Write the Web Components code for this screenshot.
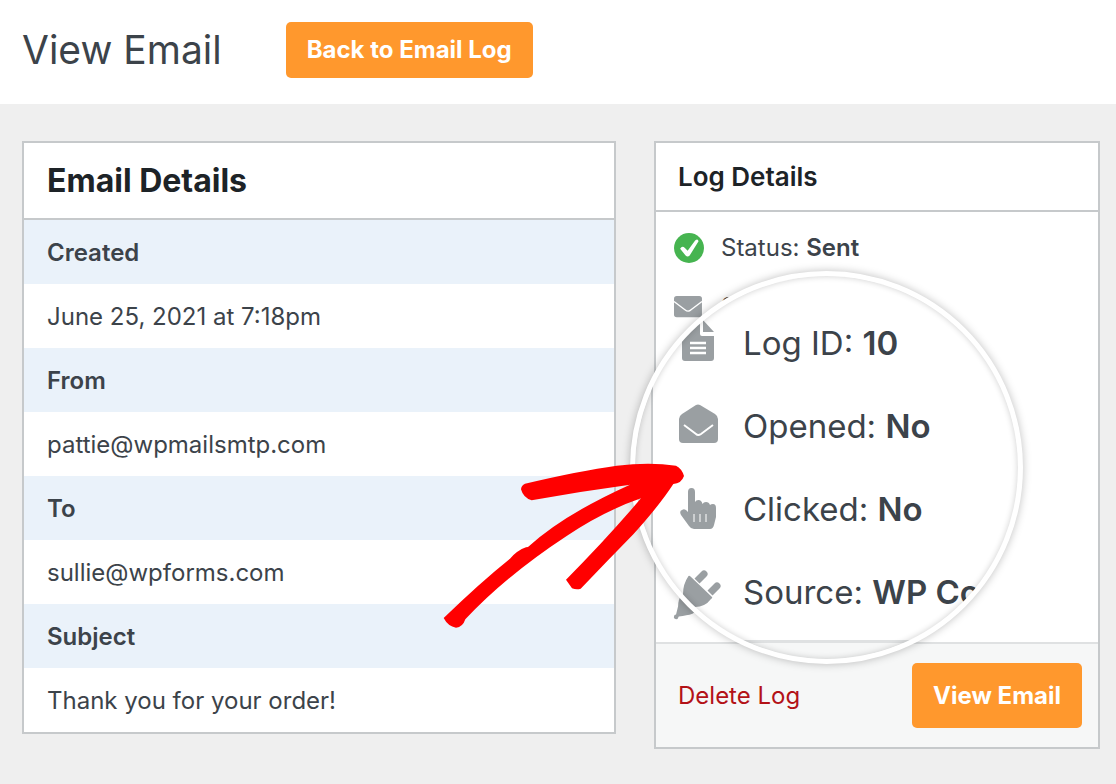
<!DOCTYPE html>
<html lang="en">
<meta charset="UTF-8">
<meta name="viewport" content="width=device-width, initial-scale=1">
<title>View Email</title>
<style>
  body {
    margin: 0;
    min-height: 100vh;
    background: #efefef;
    color: #3c434a;
    font: 24px/32px Inter, "Liberation Sans", sans-serif;
  }
</style>

<email-page></email-page>

<template id="page-template">
  <style>
    :host { display: block; }
    header {
      display: flex;
      align-items: center;
      gap: 64px;
      height: 104px;
      padding: 0 22px 5px;
      box-sizing: border-box;
      background: #fff;
    }
    h1 {
      margin: 0;
      font-size: 39px;
      line-height: 48px;
      font-weight: 400;
    }
    main {
      display: grid;
      grid-template-columns: 594fr 446fr;
      gap: 38px;
      align-items: start;
      padding: 37px 16px 36px 22px;
    }
    .log { position: relative; }
    ul {
      display: flex;
      flex-direction: column;
      height: 416px;
      margin: 0;
      padding: 6px 18px 8px;
      list-style: none;
    }
    li { display: block; }
    li:last-child { margin-top: auto; }
    footer {
      display: flex;
      align-items: center;
      justify-content: space-between;
      padding: 19px 16px 19px 22px;
      border-top: 2px solid #dfe1e2;
      background: #f6f7f7;
    }
    .delete {
      color: #b31217;
      text-decoration: none;
    }
    /* the lens and the arrow lie over the card */
    zoom-lens {
      position: absolute;
      left: -24px;
      top: 130px;
    }
    hand-arrow {
      position: absolute;
      left: -224px;
      top: 299px;
    }
  </style>

  <header>
    <h1>View Email</h1>
    <orange-button>Back to Email Log</orange-button>
  </header>
  <main>
    <detail-card size="large">
      <span slot="title">Email Details</span>
      <detail-field label="Created">June 25, 2021 at 7:18pm</detail-field>
      <detail-field label="From">pattie@wpmailsmtp.com</detail-field>
      <detail-field label="To">sullie@wpforms.com</detail-field>
      <detail-field label="Subject">Thank you for your order!</detail-field>
    </detail-card>

    <div class="log">
      <detail-card>
        <span slot="title">Log Details</span>
        <ul>
          <li><log-row icon="check">Status: <b>Sent</b></log-row></li>
          <li><log-row icon="mail">S</log-row></li>
          <li><log-row icon="plug"></log-row></li>
        </ul>
        <footer>
          <a class="delete" href="#delete">Delete Log</a>
          <orange-button tall>View Email</orange-button>
        </footer>
      </detail-card>
      <zoom-lens>
        <log-row large icon="file">Log ID: <b>10</b></log-row>
        <log-row large icon="open">Opened: <b>No</b></log-row>
        <log-row large icon="hand">Clicked: <b>No</b></log-row>
        <log-row large icon="plug">Source: <b>WP Co</b></log-row>
      </zoom-lens>
      <hand-arrow></hand-arrow>
    </div>
  </main>
</template>

<template id="button-template">
  <style>
    :host { display: block; }
    button {
      display: block;
      height: 56px;
      padding: 0 21px;
      border: 0;
      border-radius: 5px;
      background: #ff982d;
      color: #fff;
      font: inherit;
      font-weight: 700;
      white-space: nowrap;
      cursor: pointer;
    }
    :host([tall]) button { height: 65px; }
  </style>
  <button type="button"><slot></slot></button>
</template>

<template id="card-template">
  <style>
    :host {
      display: block;
      border: 2px solid #c6c9cb;
      background: #fff;
    }
    h2 {
      margin: 0;
      padding: 18px 22px 17px;
      border-bottom: 2px solid #c6c9cb;
      color: #1d2327;
      font-size: 26px;
      line-height: 32px;
      font-weight: 600;
    }
    :host([size=large]) h2 {
      padding: 18px 23px 17px;
      font-size: 32px;
      line-height: 40px;
      font-weight: 700;
    }
  </style>
  <h2><slot name="title"></slot></h2>
  <slot></slot>
</template>

<template id="field-template">
  <style>
    :host { display: block; }
    dl { margin: 0; }
    dt, dd {
      margin: 0;
      padding: 17px 23px 15px;
    }
    dt {
      background: #eaf2fa;
      font-weight: 600;
    }
  </style>
  <dl>
    <dt></dt>
    <dd><slot></slot></dd>
  </dl>
</template>

<template id="row-template">
  <style>
    :host {
      display: flex;
      align-items: center;
      gap: 17px;
      height: 59px;
      white-space: nowrap;
    }
    :host([large]) {
      gap: 22px;
      height: 83px;
      font-size: 33px;
    }
    svg {
      display: block;
      flex: none;
      width: 30px;
      height: 30px;
      fill: #9a9fa2;
      overflow: visible;
    }
    :host([large]) svg {
      width: 44px;
      height: 44px;
    }
    ::slotted(b) { font-weight: 600; }
  </style>
  <svg viewBox="0 0 44 44" aria-hidden="true"></svg>
  <span><slot></slot></span>
</template>

<template id="lens-template">
  <style>
    :host {
      display: block;
      box-sizing: border-box;
      width: 393px;
      height: 393px;
      border: 5px solid #fff;
      border-radius: 50%;
      overflow: hidden;
      background: #efefef;
      box-shadow: 0 0 8px rgba(0, 0, 0, .25);
    }
    .view {
      display: flex;
      flex-direction: column;
      box-sizing: border-box;
      height: 100%;
      padding-left: 16px;
    }
    .rows {
      padding: 25px 0 7px 24px;
      border-left: 2px solid #c6c9cb;
      background: #fff;
    }
    .foot {
      flex: 1;
      border-top: 3px solid #dfe1e2;
      background: #f6f7f7;
    }
    .shade {
      position: absolute;
      inset: 0;
      border-radius: 50%;
      box-shadow: inset 0 0 6px rgba(0, 0, 0, .2);
    }
  </style>
  <div class="view">
    <div class="rows"><slot></slot></div>
    <div class="foot"></div>
  </div>
  <div class="shade"></div>
</template>

<template id="arrow-template">
  <style>
    :host {
      display: block;
      pointer-events: none;
    }
    svg { display: block; }
  </style>
  <svg width="280" height="200" viewBox="0 0 840 600" fill="#f00" aria-hidden="true">
    <path d="M41 534Q150 428 240 356Q262 331 288 322L294 321Q400 224 600 134Q450 154 305 181Q280 174 273 148Q274 136 285 131Q450 92 560 77Q660 66 738 77Q756 86 762 108Q754 131 730 132Q690 194 610 283Q530 365 452 446Q440 450 426 445L408 419Q530 296 633 175Q520 214 410 288Q230 406 106 538Q98 562 78 563Q54 559 41 534Z"/>
  </svg>
</template>

<script>
const ICONS = {
  check: '<circle cx="22" cy="22" r="22" fill="#46b450"/><path d="M9 23q3-5 7-1l4 4L31 11q4-3 5 1L23 33q-3 3-6 0z" fill="#fff"/>',
  mail: '<rect x="0" y="6" width="41" height="31" rx="4"/><path d="M0 14l16 12q5 4 9 0l16-12" fill="none" stroke="#fff" stroke-width="2"/>',
  file: '<path d="M7-1h16v14q0 2 2 2h12v22q0 3-3 3H8q-3 0-3-3V1q0-2 2-2z"/><path d="M26-1l11 12H26z"/><path d="M13 22h16M13 27h16M13 32h16" stroke="#fff" stroke-width="2.5"/>',
  open: '<path d="M19 1q2-1 4 0l15 9q3 2 3 5v20q0 4-4 4H6q-4 0-4-4V15q0-3 3-5z"/><path d="M7 21l12 9q2 2 5 0l12-9" fill="none" stroke="#fff" stroke-width="2"/>',
  hand: '<path d="M11 5q0-4 3.500-4T18 5v10q1-2 3.500-2 3 0 4 4 1-2 3.500-2 3 0 4 3 1-1 3-1 3 0 3 4v9l-2 8q-1 4-4 4H17q-3 0-5-3L4 28q-2-4 1-5 3-2 6 2z"/><path d="M17 27v8M23 27v8M29 27v8" stroke="#fff" stroke-width="1"/>',
  plug: '<path d="M11.500 6q1-.500 2 .500L35 27q1 1-1 2-6 8-16 8-5 1-11 2-1 4-4 4-4-1-3-4 0-3 3-3L6 24q0-10 5.500-18z"/><path d="M17.500 8.500l7-7a3.500 3.500 0 0 1 5 5l-7 7zM30.500 20.500l7-7a3.500 3.500 0 0 1 5 5l-7 7z"/>'
};

// attaches an open shadow root with a copy of the template
class BaseElement extends HTMLElement {
  constructor() {
    super();
    const template = document.querySelector(this.constructor.template);
    this.attachShadow({ mode: 'open' });
    this.shadowRoot.appendChild(document.importNode(template.content, true));
  }
}

class OrangeButton extends BaseElement {
  static get template() { return '#button-template'; }
}

class DetailCard extends BaseElement {
  static get template() { return '#card-template'; }
}

class DetailField extends BaseElement {
  static get template() { return '#field-template'; }
  connectedCallback() {
    this.shadowRoot.querySelector('dt').textContent = this.getAttribute('label');
  }
}

class LogRow extends BaseElement {
  static get template() { return '#row-template'; }
  connectedCallback() {
    this.shadowRoot.querySelector('svg').innerHTML = ICONS[this.getAttribute('icon')] || '';
  }
}

class ZoomLens extends BaseElement {
  static get template() { return '#lens-template'; }
}

class HandArrow extends BaseElement {
  static get template() { return '#arrow-template'; }
}

class EmailPage extends BaseElement {
  static get template() { return '#page-template'; }
}

window.customElements.define('orange-button', OrangeButton);
window.customElements.define('detail-card', DetailCard);
window.customElements.define('detail-field', DetailField);
window.customElements.define('log-row', LogRow);
window.customElements.define('zoom-lens', ZoomLens);
window.customElements.define('hand-arrow', HandArrow);
window.customElements.define('email-page', EmailPage);
</script>

</html>
